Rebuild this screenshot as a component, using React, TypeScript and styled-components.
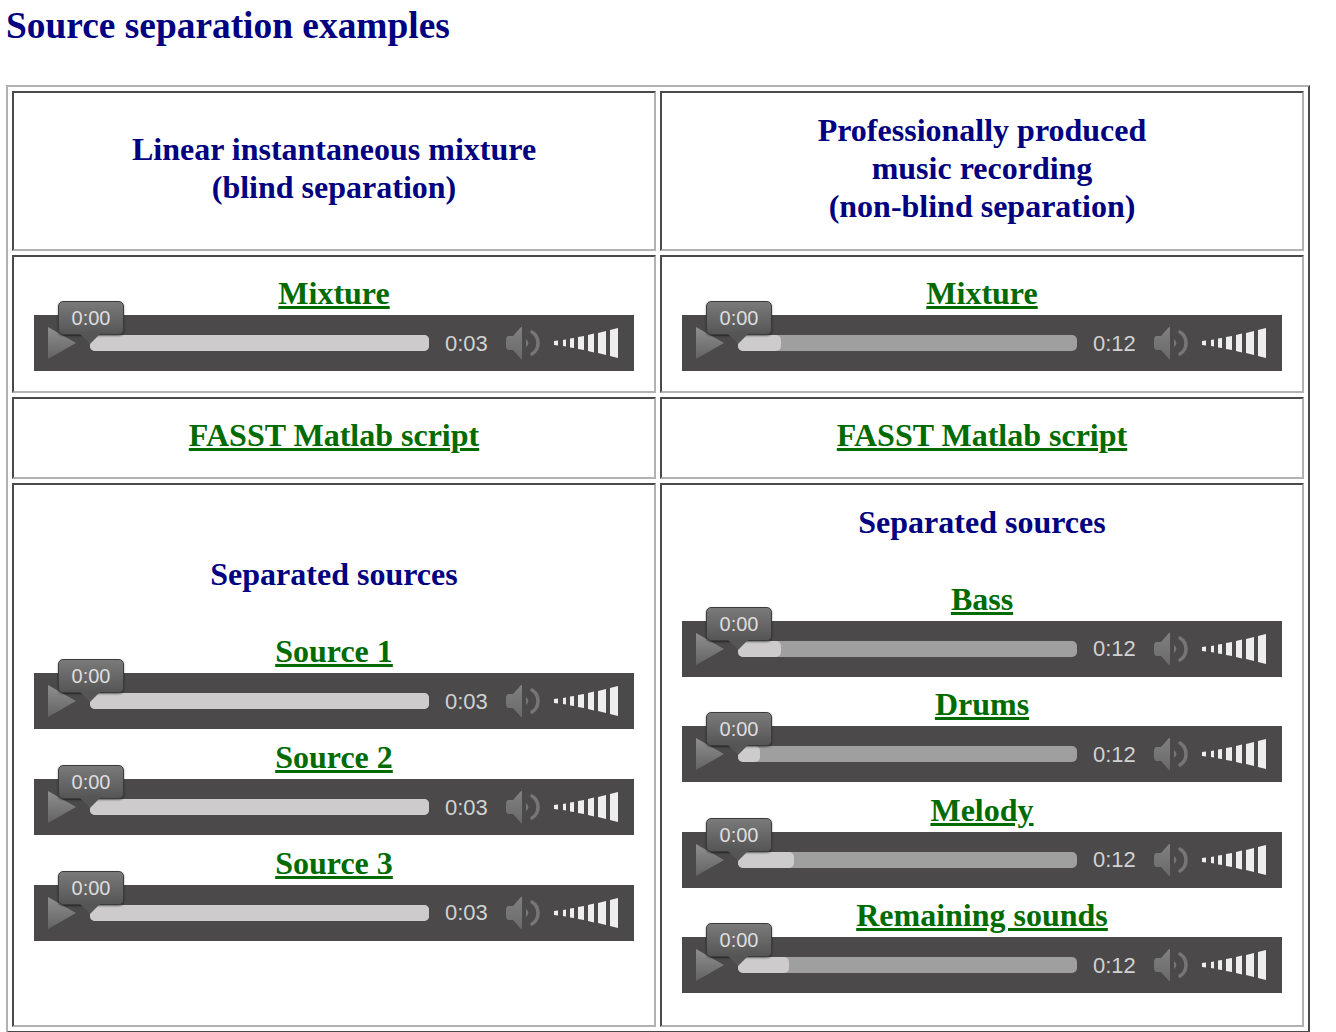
import styled, { createGlobalStyle } from 'styled-components';

const GlobalStyle = createGlobalStyle`
  html, body {
    margin: 0;
    padding: 0;
    background: #fff;
    overflow: hidden;
  }
  body {
    font-family: 'Liberation Serif', 'Times New Roman', serif;
  }
`;

const SPEAKER_GRADIENT = 'speakerFill';

function PlayIcon() {
  return (
    <PlaySvg viewBox="0 0 28 32" width="28" height="32">
      <defs>
        <linearGradient id="playFill" x1="0" y1="0" x2="0" y2="1">
          <stop offset="0" stopColor="#8f8f8f" />
          <stop offset="1" stopColor="#636363" />
        </linearGradient>
      </defs>
      <polygon points="0,0 28,16 0,32" fill="url(#playFill)" />
    </PlaySvg>
  );
}

function SpeakerIcon() {
  return (
    <SpeakerSvg viewBox="0 0 34 34" width="34" height="34">
      <defs>
        <linearGradient id={SPEAKER_GRADIENT} x1="0" y1="0" x2="0" y2="1">
          <stop offset="0" stopColor="#808080" />
          <stop offset="1" stopColor="#6a6a6a" />
        </linearGradient>
      </defs>
      <path d="M0 14 Q0 10 3 10 L7 10 L15 1 Q16 0 16 2 L16 32 Q16 34 15 33 L7 24 L3 24 Q0 24 0 20 Z" fill={`url(#${SPEAKER_GRADIENT})`} />
      <path d="M20 13 L20 21 Q25 17 20 13 Z" fill="#767676" />
      <path d="M26 6 C34 11 34 23 26 28" fill="none" stroke="#767676" strokeWidth="3.5" strokeLinecap="round" />
    </SpeakerSvg>
  );
}

function VolumeBars() {
  return (
    <VolumeSvg viewBox="0 0 64 30" width="64" height="30">
      <polygon points="0,13 4,12.5 4,17.5 0,17" fill="#eee" />
      <polygon points="9,12 12,11.5 12,18.5 9,18" fill="#eee" />
      <polygon points="16,10.5 20,10 20,20 16,19.5" fill="#eee" />
      <polygon points="24,9 30,8 30,22 24,21" fill="#eee" />
      <polygon points="34,7 40,5.5 40,24.5 34,23" fill="#eee" />
      <polygon points="44,5 52,3 52,27 44,25" fill="#eee" />
      <polygon points="56,2 64,0 64,30 56,28" fill="#eee" />
    </VolumeSvg>
  );
}

function Player({ duration, loaded }: { duration: string; loaded?: number }) {
  return (
    <PlayerBar>
      <PlayIcon />
      <Track $partial={loaded !== undefined}>
        <Loaded style={{ width: loaded !== undefined ? `${loaded}px` : '100%' }} />
        <Bubble>0:00</Bubble>
      </Track>
      <Time>{duration}</Time>
      <SpeakerIcon />
      <VolumeBars />
    </PlayerBar>
  );
}

function Clip({ title, duration, loaded }: { title: string; duration: string; loaded?: number }) {
  return (
    <ClipBlock>
      <ClipLink href="#">{title}</ClipLink>
      <Player duration={duration} loaded={loaded} />
    </ClipBlock>
  );
}

export default function App() {
  return (
    <>
      <GlobalStyle />
      <PageTitle>Source separation examples</PageTitle>
      <Table>
        <tbody>
          <tr>
            <HeadCell>
              <Heading>
                Linear instantaneous mixture
                <br />
                (blind separation)
              </Heading>
            </HeadCell>
            <HeadCell>
              <Heading>
                Professionally produced
                <br />
                music recording
                <br />
                (non-blind separation)
              </Heading>
            </HeadCell>
          </tr>
          <tr>
            <MixCell>
              <Clip title="Mixture" duration="0:03" />
            </MixCell>
            <MixCell>
              <Clip title="Mixture" duration="0:12" loaded={43} />
            </MixCell>
          </tr>
          <tr>
            <ScriptCell>
              <ClipLink href="#">FASST Matlab script</ClipLink>
            </ScriptCell>
            <ScriptCell>
              <ClipLink href="#">FASST Matlab script</ClipLink>
            </ScriptCell>
          </tr>
          <tr>
            <SourcesCell>
              <SourcesTitle>Separated sources</SourcesTitle>
              <Clip title="Source 1" duration="0:03" />
              <Clip title="Source 2" duration="0:03" />
              <Clip title="Source 3" duration="0:03" />
            </SourcesCell>
            <SourcesCell>
              <SourcesTitle>Separated sources</SourcesTitle>
              <Clip title="Bass" duration="0:12" loaded={43} />
              <Clip title="Drums" duration="0:12" loaded={22} />
              <Clip title="Melody" duration="0:12" loaded={56} />
              <Clip title="Remaining sounds" duration="0:12" loaded={51} />
            </SourcesCell>
          </tr>
        </tbody>
      </Table>
    </>
  );
}

const PageTitle = styled.h1`
  margin: 0;
  padding: 7px 0 0 6px;
  height: 85px;
  box-sizing: border-box;
  font-size: 37.4px;
  line-height: 38px;
  font-weight: bold;
  color: #000080;
`;

const Table = styled.table`
  margin-left: 6px;
  width: 1304px;
  table-layout: fixed;
  border-collapse: separate;
  border-spacing: 4px;
  border-width: 2px;
  border-style: solid;
  border-color: #b2b2b2 #4a4a4a #4a4a4a #b2b2b2;
`;

const Cell = styled.td`
  box-sizing: border-box;
  padding: 0 20px;
  border-width: 2px;
  border-style: solid;
  border-color: #4a4a4a #b2b2b2 #b2b2b2 #4a4a4a;
  text-align: center;
  vertical-align: middle;
`;

const HeadCell = styled(Cell)`
  height: 160px;
  padding-bottom: 6px;
`;

const MixCell = styled(Cell)`
  height: 138px;
`;

const ScriptCell = styled(Cell)`
  height: 82px;
`;

const SourcesCell = styled(Cell)`
  height: 544px;
  padding-bottom: 11px;
`;

const Heading = styled.div`
  font-size: 32px;
  line-height: 38px;
  font-weight: bold;
  color: #000080;
`;

const SourcesTitle = styled(Heading)`
  line-height: 32px;
  padding-bottom: 6px;
  margin-bottom: 39px;
`;

const ClipBlock = styled.div`
  & + & {
    margin-top: 11.67px;
  }
`;

const ClipLink = styled.a`
  display: block;
  padding-bottom: 6px;
  font-size: 32px;
  line-height: 32px;
  font-weight: bold;
  color: #006b00;
  text-decoration: underline;
`;

const PlayerBar = styled.div`
  display: flex;
  align-items: center;
  box-sizing: border-box;
  width: 600px;
  height: 56px;
  margin: 0 auto;
  padding: 0 16px 0 14px;
  background: #4b4949;
`;

const PlaySvg = styled.svg`
  flex-shrink: 0;
  margin-right: 14px;
`;

const Track = styled.div<{ $partial: boolean }>`
  position: relative;
  flex: 1;
  height: 16px;
  border-radius: 5px;
  background: ${p => (p.$partial ? '#a09f9f' : '#cdcbcb')};
`;

const Loaded = styled.div`
  height: 100%;
  border-radius: 5px;
  background: #cdcbcb;
`;

const Bubble = styled.div`
  position: absolute;
  left: -32px;
  top: -34px;
  width: 64px;
  height: 32px;
  border: 1px solid #3c3c3c;
  border-radius: 5px;
  background: linear-gradient(#7a7a7a, #555);
  box-shadow: 0 1px 2px rgba(0, 0, 0, 0.5);
  font-family: 'Liberation Sans', Arial, sans-serif;
  font-size: 20px;
  line-height: 32px;
  text-align: center;
  color: #dedede;

  &::after {
    content: '';
    position: absolute;
    left: 21px;
    top: 32px;
    border-left: 10px solid transparent;
    border-right: 10px solid transparent;
    border-top: 10px solid #555;
  }
`;

const Time = styled.span`
  width: 77px;
  flex-shrink: 0;
  box-sizing: border-box;
  padding: 1px 0 0 16px;
  font-family: 'Liberation Sans', Arial, sans-serif;
  font-size: 22px;
  color: #d2d2d2;
  text-align: left;
`;

const SpeakerSvg = styled.svg`
  flex-shrink: 0;
  margin-right: 14px;
`;

const VolumeSvg = styled.svg`
  flex-shrink: 0;
`;
